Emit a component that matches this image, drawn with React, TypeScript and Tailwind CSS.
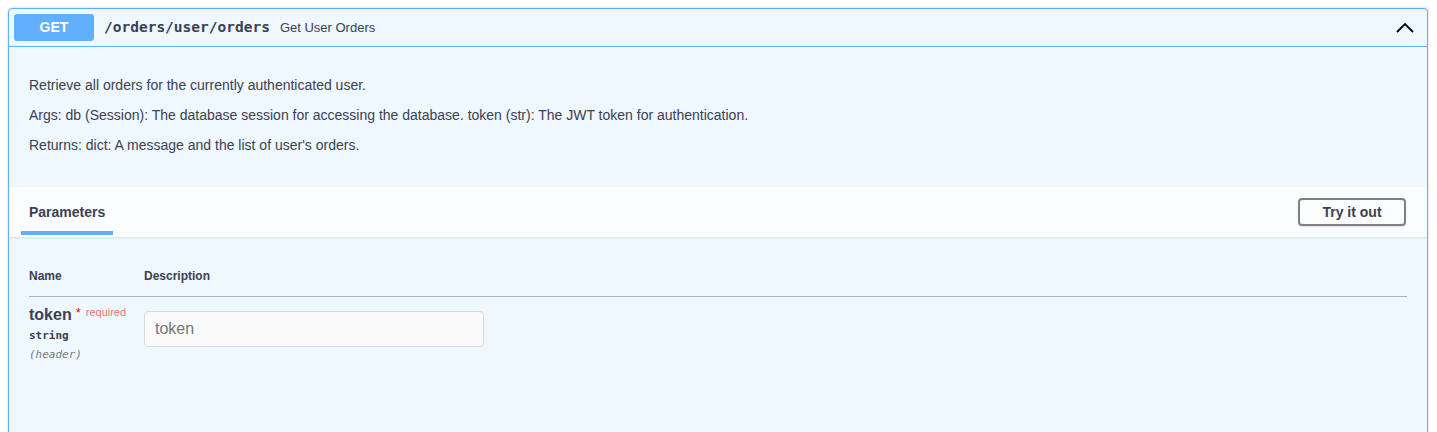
import React from 'react';

const sans = "font-['Liberation_Sans',Arial,sans-serif]";
const mono = "font-['DejaVu_Sans_Mono',monospace]";

const App: React.FC = () => {
  const lines = [
    'Retrieve all orders for the currently authenticated user.',
    'Args: db (Session): The database session for accessing the database. token (str): The JWT token for authentication.',
    "Returns: dict: A message and the list of user's orders.",
  ];

  return (
    <div className={`min-h-screen bg-white pt-2 pl-2 ${sans} text-[#3b4151]`}>
      <div className="w-[1420px] h-[440px] rounded-[4px] border border-[#61affe] bg-[#eff7ff] shadow-[0_0_3px_rgba(0,0,0,0.19)] overflow-hidden">
        {/* Summary */}
        <div className="flex items-center h-[38px] px-[5px] border-b border-[#61affe]">
          <span className="w-[80px] h-[27px] rounded-[3px] bg-[#61affe] text-white text-[14px] font-bold flex items-center justify-center">
            GET
          </span>
          <span className={`ml-[10px] ${mono} text-[14.5px] font-bold text-[#3b4151]`}>/orders/user/orders</span>
          <span className="ml-[10px] text-[13px] text-[#3b4151]">Get User Orders</span>
          <div className="ml-auto mr-[7px] flex items-center">
            <svg width="20" height="20" viewBox="0 0 20 20">
              <polyline points="2,14 10,6 18,14" fill="none" stroke="#000" strokeWidth="1.8" />
            </svg>
          </div>
        </div>

        {/* Description */}
        <div className="px-[20px] pt-[30px] pb-[34px] flex flex-col gap-[14px]">
          {lines.map((l) => (
            <p key={l} className="text-[14px] leading-[16px]">{l}</p>
          ))}
        </div>

        {/* Section header */}
        <div className="h-[50px] bg-[#fcfdff] shadow-[0_1px_2px_rgba(0,0,0,0.1)] flex items-center justify-between px-[20px]">
          <div className="relative h-full flex items-center">
            <h4 className="text-[14px] font-bold">Parameters</h4>
            <div className="absolute left-[-8px] right-[-8px] top-[44px] h-[4px] bg-[#61affe]" />
          </div>
          <button className="mr-[1px] w-[108px] h-[28px] rounded-[4px] border-2 border-[#808080] bg-transparent text-[14px] font-bold text-[#3b4151] shadow-[0_1px_2px_rgba(0,0,0,0.1)]">
            Try it out
          </button>
        </div>

        {/* Parameters table */}
        <div className="px-[20px] pt-[30px]">
          <div className="flex border-b border-[#b0b3b9] pb-[11px] text-[12px] font-bold">
            <div className="w-[115px]">Name</div>
            <div>Description</div>
          </div>
          <div className="flex">
            <div className="w-[115px] pt-[9px]">
              <div className="flex items-start">
                <span className="text-[16px] font-bold leading-[18px]">token</span>
                <span className="ml-[4px] text-[13px] text-[#ff0000] leading-[14px]">*</span>
                <span className="ml-[5px] text-[11px] text-[rgba(255,0,0,0.6)] leading-[12px]">required</span>
              </div>
              <div className={`${mono} text-[11px] leading-[16px] font-bold mt-[4px]`}>string</div>
              <div className={`${mono} text-[11px] leading-[16px] italic text-[#7a7a7a] mt-[3px]`}>(header)</div>
            </div>
            <div className="pt-[14px]">
              <input
                placeholder="token"
                className="w-[340px] h-[36px] rounded-[4px] border border-[#d9d9d9] bg-[#fafafa] px-[10px] text-[16px] text-[#3b4151] placeholder:text-[#757575] outline-none"
              />
            </div>
          </div>
        </div>
      </div>
    </div>
  );
};

export default App;
